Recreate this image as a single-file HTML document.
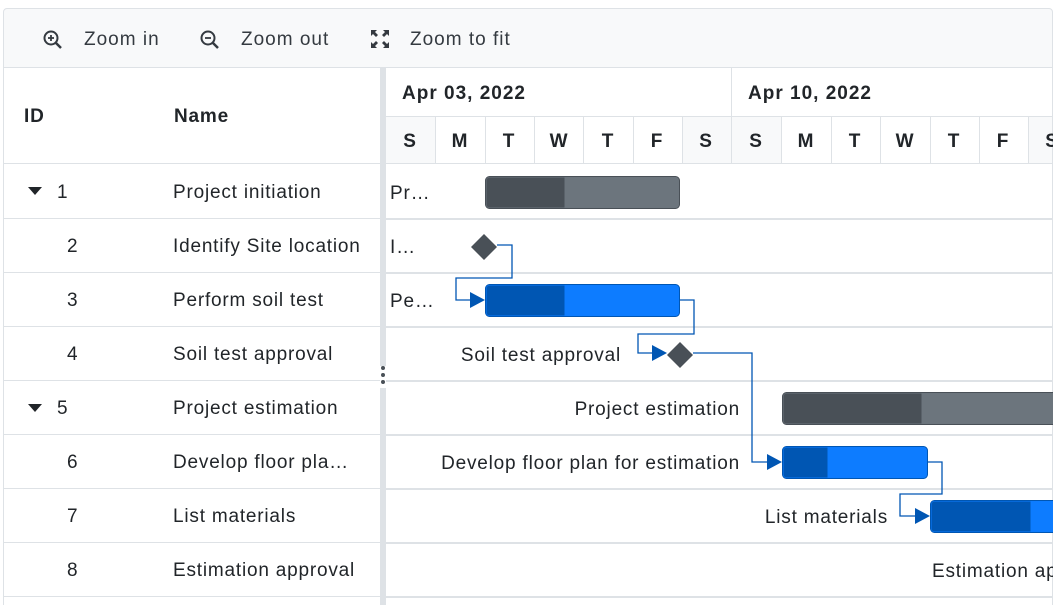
<!DOCTYPE html>
<html><head><style>
*{margin:0;padding:0;box-sizing:border-box}
body{width:1057px;height:605px;background:#fff;font-family:"Liberation Sans",Arial,sans-serif;color:#212529;position:relative;overflow:hidden;letter-spacing:0.8px}
.a{position:absolute}
.tb{left:3px;top:8px;width:1050px;height:60px;background:#f8f9fa;border:1px solid #dee2e6;border-radius:4px 4px 0 0}
.tbt{font-size:19px;color:#343a40;top:29px;letter-spacing:1px}
.hd{font-weight:bold;font-size:19px}
text{letter-spacing:0.8px}
</style></head><body>
<div class="a tb"></div>
<svg class="a" style="left:42px;top:29px" width="22" height="22" viewBox="0 0 22 22"><circle cx="9" cy="9" r="6.5" fill="none" stroke="#343a40" stroke-width="2"/><line x1="14" y1="14" x2="19" y2="19" stroke="#343a40" stroke-width="2.5"/><line x1="6" y1="9" x2="12" y2="9" stroke="#343a40" stroke-width="1.8"/><line x1="9" y1="6" x2="9" y2="12" stroke="#343a40" stroke-width="1.8"/></svg>
<div class="a tbt" style="left:84px">Zoom in</div>
<svg class="a" style="left:199px;top:29px" width="22" height="22" viewBox="0 0 22 22"><circle cx="9" cy="9" r="6.5" fill="none" stroke="#343a40" stroke-width="2"/><line x1="14" y1="14" x2="19" y2="19" stroke="#343a40" stroke-width="2.5"/><line x1="6" y1="9" x2="12" y2="9" stroke="#343a40" stroke-width="1.8"/></svg>
<div class="a tbt" style="left:241px">Zoom out</div>
<svg class="a" style="left:370px;top:29px" width="20" height="20" viewBox="0 0 20 20" fill="#343a40"><path d="M1 1h6l-2 2 3 3-2 2-3-3-2 2z M19 1v6l-2-2-3 3-2-2 3-3-2-2z M1 19v-6l2 2 3-3 2 2-3 3 2 2z M19 19h-6l2-2-3-3 2-2 3 3 2-2z"/></svg>
<div class="a tbt" style="left:410px">Zoom to fit</div>

<div class="a" style="left:3px;top:68px;width:1px;height:537px;background:#dee2e6"></div>
<div class="a" style="left:4px;top:163px;width:376px;height:1px;background:#dee2e6"></div>
<div class="a hd" style="left:24px;top:106px">ID</div>
<div class="a hd" style="left:174px;top:106px">Name</div>
<div class="a" style="left:380px;top:68px;width:6px;height:537px;background:#dee2e6"></div>
<div class="a" style="left:380px;top:366px;width:6px;height:22px;background:#fff"></div>
<div class="a" style="left:381px;top:366px;font-size:0">
<div style="width:4px;height:4px;border-radius:2px;background:#495057;margin-bottom:3px"></div><div style="width:4px;height:4px;border-radius:2px;background:#495057;margin-bottom:3px"></div><div style="width:4px;height:4px;border-radius:2px;background:#495057"></div></div>

<svg class="a" style="left:0;top:0" width="1057" height="605">
<g stroke="#dee2e6" stroke-width="1">
<line x1="4" y1="218.5" x2="380" y2="218.5"/><line x1="4" y1="272.5" x2="380" y2="272.5"/><line x1="4" y1="326.5" x2="380" y2="326.5"/><line x1="4" y1="380.5" x2="380" y2="380.5"/><line x1="4" y1="434.5" x2="380" y2="434.5"/><line x1="4" y1="488.5" x2="380" y2="488.5"/><line x1="4" y1="542.5" x2="380" y2="542.5"/><line x1="4" y1="596.5" x2="380" y2="596.5"/>
</g>
<rect x="386" y="117" width="49" height="46" fill="#f8f9fa"/>
<rect x="682" y="117" width="99" height="46" fill="#f8f9fa"/>
<rect x="1028" y="117" width="29" height="46" fill="#f8f9fa"/>
<g stroke="#dee2e6" stroke-width="1">
<line x1="386" y1="116.5" x2="1052" y2="116.5"/><line x1="386" y1="163.5" x2="1052" y2="163.5"/>
<line x1="731.5" y1="68" x2="731.5" y2="163"/>
<line x1="435.5" y1="117" x2="435.5" y2="163"/><line x1="485.5" y1="117" x2="485.5" y2="163"/><line x1="534.5" y1="117" x2="534.5" y2="163"/><line x1="583.5" y1="117" x2="583.5" y2="163"/><line x1="633.5" y1="117" x2="633.5" y2="163"/><line x1="682.5" y1="117" x2="682.5" y2="163"/><line x1="781.5" y1="117" x2="781.5" y2="163"/><line x1="831.5" y1="117" x2="831.5" y2="163"/><line x1="880.5" y1="117" x2="880.5" y2="163"/><line x1="930.5" y1="117" x2="930.5" y2="163"/><line x1="979.5" y1="117" x2="979.5" y2="163"/><line x1="1028.5" y1="117" x2="1028.5" y2="163"/>
</g>
<g stroke="#dee2e6" stroke-width="2">
<line x1="386" y1="219" x2="1052" y2="219"/><line x1="386" y1="273" x2="1052" y2="273"/><line x1="386" y1="327" x2="1052" y2="327"/><line x1="386" y1="381" x2="1052" y2="381"/><line x1="386" y1="435" x2="1052" y2="435"/><line x1="386" y1="489" x2="1052" y2="489"/><line x1="386" y1="543" x2="1052" y2="543"/><line x1="386" y1="597" x2="1052" y2="597"/>
</g>
<line x1="1052.5" y1="68" x2="1052.5" y2="605" stroke="#dee2e6"/>
<g font-family="Liberation Sans,Arial,sans-serif" font-weight="bold" font-size="19" fill="#212529">
<text x="402" y="99" style="letter-spacing:1px">Apr 03, 2022</text><text x="748" y="99" style="letter-spacing:1px">Apr 10, 2022</text>
<g text-anchor="middle" style="letter-spacing:0"><text x="410" y="147">S</text><text x="460" y="147">M</text><text x="509" y="147">T</text><text x="559" y="147">W</text><text x="608" y="147">T</text><text x="657" y="147">F</text><text x="706" y="147">S</text><text x="756" y="147">S</text><text x="806" y="147">M</text><text x="855" y="147">T</text><text x="905" y="147">W</text><text x="954" y="147">T</text><text x="1003" y="147">F</text><text x="1052" y="147">S</text></g>
</g>
<rect x="485.5" y="176.5" width="194" height="32" rx="4" fill="#6c757d" stroke="#495057"/>
<path d="M489.5 177.5h75v30h-75a3 3 0 0 1-3-3v-24a3 3 0 0 1 3-3z" fill="#495057"/>
<rect x="485.5" y="284.5" width="194" height="32" rx="4" fill="#0d7cff" stroke="#0056b3"/>
<path d="M489.5 285.5h75v30h-75a3 3 0 0 1-3-3v-24a3 3 0 0 1 3-3z" fill="#0056b3"/>
<rect x="782.5" y="392.5" width="280" height="32" rx="4" fill="#6c757d" stroke="#495057"/>
<path d="M786.5 393.5h135v30h-135a3 3 0 0 1-3-3v-24a3 3 0 0 1 3-3z" fill="#495057"/>
<rect x="782.5" y="446.5" width="145" height="32" rx="4" fill="#0d7cff" stroke="#0056b3"/>
<path d="M786.5 447.5h41v30h-41a3 3 0 0 1-3-3v-24a3 3 0 0 1 3-3z" fill="#0056b3"/>
<rect x="930.5" y="500.5" width="140" height="32" rx="4" fill="#0d7cff" stroke="#0056b3"/>
<path d="M934.5 501.5h96v30h-96a3 3 0 0 1-3-3v-24a3 3 0 0 1 3-3z" fill="#0056b3"/>
<polygon points="484,234 497,247 484,260 471,247" fill="#495057"/>
<polygon points="680,342 693,355 680,368 667,355" fill="#495057"/>
<g fill="none" stroke="#0056b3" stroke-width="1.3">
<polyline points="497,245 512,245 512,278 456,278 456,300 472,300"/>
<polyline points="680,300 694,300 694,334 638,334 638,353 654,353"/>
<polyline points="693,353 752,353 752,462 768,462"/>
<polyline points="928,462 942,462 942,494 900,494 900,516 916,516"/>
</g>
<g fill="#0056b3">
<polygon points="470,292 485,300 470,308"/>
<polygon points="652,345 667,353 652,361"/>
<polygon points="767,454 782,462 767,470"/>
<polygon points="915,508 930,516 915,524"/>
</g>
<g font-family="Liberation Sans,Arial,sans-serif" font-size="19" fill="#212529">
<text x="390" y="199">Pr…</text><text x="390" y="253">I…</text><text x="390" y="307">Pe…</text>
<g text-anchor="end"><text x="621" y="361">Soil test approval</text><text x="740" y="415">Project estimation</text><text x="740" y="469">Develop floor plan for estimation</text><text x="888" y="523">List materials</text></g>
<text x="932" y="577">Estimation ap</text>
</g>
<rect x="1053" y="68" width="4" height="537" fill="#fff"/>
<g font-family="Liberation Sans,Arial,sans-serif" font-size="19" fill="#212529">
<polygon points="28,187 42,187 35,195" fill="#212529"/><text x="57" y="198">1</text><text x="173" y="198">Project initiation</text>
<text x="67" y="252">2</text><text x="173" y="252">Identify Site location</text>
<text x="67" y="306">3</text><text x="173" y="306">Perform soil test</text>
<text x="67" y="360">4</text><text x="173" y="360">Soil test approval</text>
<polygon points="28,404 42,404 35,412" fill="#212529"/><text x="57" y="414">5</text><text x="173" y="414">Project estimation</text>
<text x="67" y="468">6</text><text x="173" y="468">Develop floor pla…</text>
<text x="67" y="522">7</text><text x="173" y="522">List materials</text>
<text x="67" y="576">8</text><text x="173" y="576">Estimation approval</text>
</g>
</svg>
</body></html>
